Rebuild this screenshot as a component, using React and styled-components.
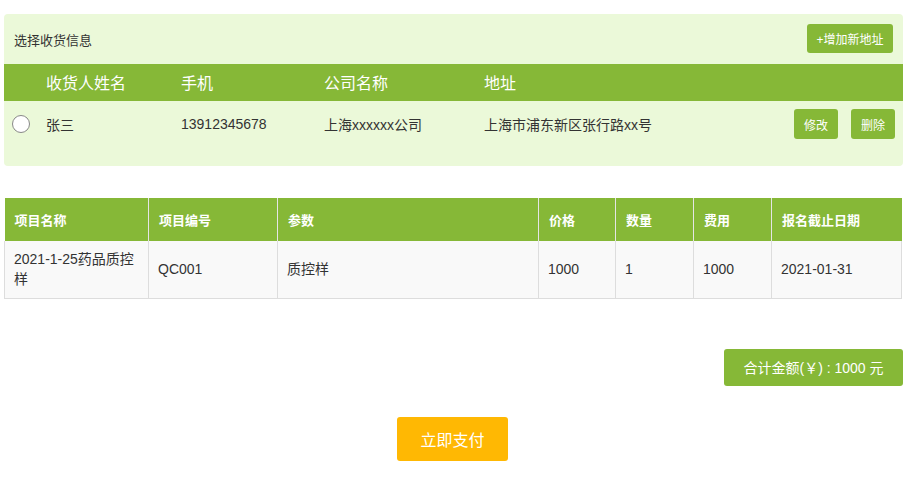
import React from "react";
import styled, { createGlobalStyle } from "styled-components";

const GlobalStyle = createGlobalStyle`
  body {
    margin: 0;
    background: #fff;
    font-family: "Liberation Sans", "Noto Sans CJK SC", sans-serif;
    color: #333;
  }
`;

const green = "#86b837";

const addresses = [
  { name: "张三", phone: "13912345678", company: "上海xxxxxx公司", address: "上海市浦东新区张行路xx号" },
];

const items = [
  {
    name: "2021-1-25药品质控样",
    code: "QC001",
    param: "质控样",
    price: "1000",
    qty: "1",
    fee: "1000",
    deadline: "2021-01-31",
  },
];

const columns = [
  { key: "name", title: "项目名称", width: 144 },
  { key: "code", title: "项目编号", width: 129 },
  { key: "param", title: "参数", width: 261 },
  { key: "price", title: "价格", width: 77 },
  { key: "qty", title: "数量", width: 78 },
  { key: "fee", title: "费用", width: 78 },
  { key: "deadline", title: "报名截止日期", width: 130 },
];

function App() {
  return (
    <>
      <GlobalStyle />
      <Page>
        <AddressPanel>
          <PanelTop>
            <PanelTitle>选择收货信息</PanelTitle>
            <GreenButton>+增加新地址</GreenButton>
          </PanelTop>
          <AddrGrid>
            <AddrHead />
            <AddrHead>收货人姓名</AddrHead>
            <AddrHead>手机</AddrHead>
            <AddrHead>公司名称</AddrHead>
            <AddrHead>地址</AddrHead>
            <AddrHead />
            {addresses.map((a, i) => (
              <React.Fragment key={i}>
                <AddrCell>
                  <Radio />
                </AddrCell>
                <AddrCell>{a.name}</AddrCell>
                <AddrCell>{a.phone}</AddrCell>
                <AddrCell>{a.company}</AddrCell>
                <AddrCell>{a.address}</AddrCell>
                <AddrActions>
                  <SmallButton>修改</SmallButton>
                  <SmallButton>删除</SmallButton>
                </AddrActions>
              </React.Fragment>
            ))}
          </AddrGrid>
        </AddressPanel>

        <Table>
          <colgroup>
            {columns.map((c) => (
              <col key={c.key} width={c.width} />
            ))}
          </colgroup>
          <thead>
            <tr>
              {columns.map((c) => (
                <Th key={c.key}>{c.title}</Th>
              ))}
            </tr>
          </thead>
          <tbody>
            {items.map((it, i) => (
              <tr key={i}>
                {columns.map((c) => (
                  <Td key={c.key}>{it[c.key]}</Td>
                ))}
              </tr>
            ))}
          </tbody>
        </Table>

        <TotalRow>
          <TotalBox>合计金额(￥) : 1000 元</TotalBox>
        </TotalRow>

        <PayRow>
          <PayButton>立即支付</PayButton>
        </PayRow>
      </Page>
    </>
  );
}

export default App;

const Page = styled.div`
  width: 899px;
  margin-left: 4px;
  padding-top: 14px;
`;

const AddressPanel = styled.div`
  background: #ebf9d9;
  border-radius: 4px;
  padding-bottom: 17px;
`;

const PanelTop = styled.div`
  height: 50px;
  display: flex;
  align-items: center;
  justify-content: space-between;
  padding: 0 10px 0 10px;
  box-sizing: border-box;
`;

const PanelTitle = styled.div`
  font-size: 13px;
  color: #333;
`;

const GreenButton = styled.div`
  width: 86px;
  height: 29px;
  background: ${green};
  color: #fff;
  font-size: 12px;
  border-radius: 3px;
  display: flex;
  align-items: center;
  justify-content: center;
  margin-top: -1px;
`;

const AddrGrid = styled.div`
  display: grid;
  grid-template-columns: 42px 135px 143px 160px 1fr 160px;
`;

const AddrHead = styled.div`
  height: 37px;
  padding-bottom: 1px;
  box-sizing: border-box;
  background: ${green};
  color: #fff;
  font-size: 16px;
  display: flex;
  align-items: center;
`;

const AddrCell = styled.div`
  height: 48px;
  padding-bottom: 2px;
  box-sizing: border-box;
  display: flex;
  align-items: center;
  font-size: 14px;
  color: #333;
`;

const Radio = styled.span`
  width: 16px;
  height: 16px;
  margin-left: 8px;
  border: 1px solid #888;
  border-radius: 50%;
  background: #fff;
`;

const AddrActions = styled.div`
  height: 48px;
  padding: 0 8px 2px 0;
  box-sizing: border-box;
  display: flex;
  align-items: center;
  justify-content: flex-end;
  gap: 13px;
`;

const SmallButton = styled.div`
  width: 44px;
  height: 30px;
  background: ${green};
  color: #fff;
  font-size: 12px;
  border-radius: 3px;
  display: flex;
  align-items: center;
  justify-content: center;
`;

const Table = styled.table`
  margin-top: 32px;
  width: 897px;
  border-collapse: collapse;
  table-layout: fixed;
`;

const Th = styled.th`
  height: 43px;
  background: ${green};
  color: #fff;
  font-size: 13px;
  font-weight: bold;
  text-align: left;
  padding: 0 10px;
  border-left: 1px solid #e5e5e5;
  &:first-child {
    border-left: none;
  }
`;

const Td = styled.td`
  height: 57px;
  background: #f9f9f9;
  font-size: 14px;
  line-height: 20px;
  color: #333;
  padding: 8px 9px;
  box-sizing: border-box;
  border: 1px solid #ddd;
  border-top: none;
`;

const TotalRow = styled.div`
  display: flex;
  justify-content: flex-end;
  margin-top: 50px;
`;

const TotalBox = styled.div`
  width: 179px;
  height: 37px;
  background: ${green};
  color: #fff;
  font-size: 14px;
  border-radius: 3px;
  display: flex;
  align-items: center;
  justify-content: center;
`;

const PayRow = styled.div`
  display: flex;
  justify-content: center;
  margin-top: 31px;
  padding-right: 2px;
`;

const PayButton = styled.div`
  width: 111px;
  height: 44px;
  background: #ffb803;
  color: #fff;
  font-size: 16px;
  border-radius: 3px;
  display: flex;
  align-items: center;
  justify-content: center;
`;
